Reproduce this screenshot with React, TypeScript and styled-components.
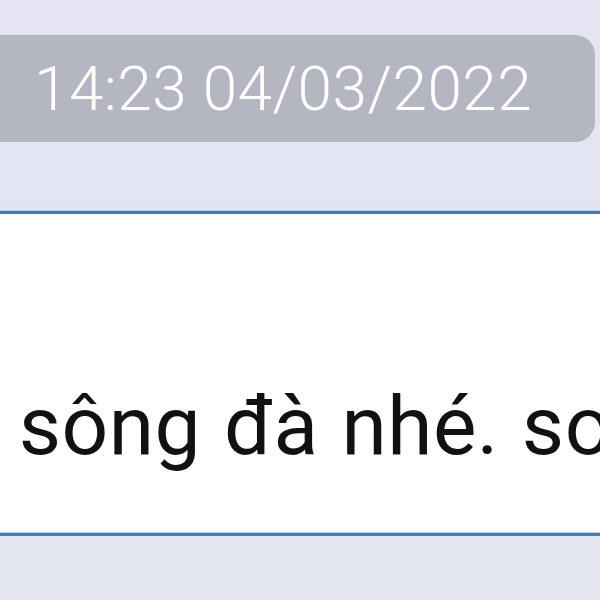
import * as React from 'react';
import styled, {createGlobalStyle} from 'styled-components';

const GlobalStyle = createGlobalStyle`
  html, body {
    margin: 0;
    padding: 0;
    background: #e4e4f1;
  }
  body {
    width: 600px;
    height: 600px;
    overflow: hidden;
  }
`;

const Screen = styled.div`
  display: flex;
  flex-direction: column;
  width: 600px;
  height: 600px;
  overflow: hidden;
  background: #e4e4f1;
  font-family: Roboto, 'Liberation Sans', sans-serif;
`;

const HeaderArea = styled.div`
  height: 211px;
  box-sizing: border-box;
  padding: 35px 5px 0 0;
  background: linear-gradient(#e6e5f3, #e2e5f1);
`;

const TimePill = styled.div`
  display: flex;
  align-items: center;
  height: 107px;
  box-sizing: border-box;
  padding-left: 34px;
  background: #b4b7c1;
  border-radius: 0 20px 20px 0;
`;

const TimeText = styled.span`
  font-size: 62px;
  font-weight: 300;
  line-height: 1;
  color: #ffffff;
  letter-spacing: 0.5px;
`;

const Divider = styled.div`
  height: 3px;
  background: #4b7ba8;
  box-shadow: 0 -1px 0 #a9d2f2, 0 1px 0 #bfe0f8;
  flex-shrink: 0;
`;

const MessageArea = styled.div`
  height: 319px;
  box-sizing: border-box;
  padding-top: 171px;
  background: #ffffff;
  overflow: hidden;
  white-space: nowrap;
`;

const MessageText = styled.div`
  font-size: 82px;
  line-height: 1;
  color: #111111;
  letter-spacing: 0.5px;
  word-spacing: 2px;
  text-indent: -95px;
`;

const FooterArea = styled.div`
  flex: 1;
  background: #e3e5f1;
`;

export default function App() {
  return (
    <>
      <GlobalStyle />
      <Screen>
        <HeaderArea>
          <TimePill>
            <TimeText>14:23 04/03/2022</TimeText>
          </TimePill>
        </HeaderArea>
        <Divider />
        <MessageArea>
          <MessageText>ăn sông đà nhé. sorry</MessageText>
        </MessageArea>
        <Divider />
        <FooterArea />
      </Screen>
    </>
  );
}
